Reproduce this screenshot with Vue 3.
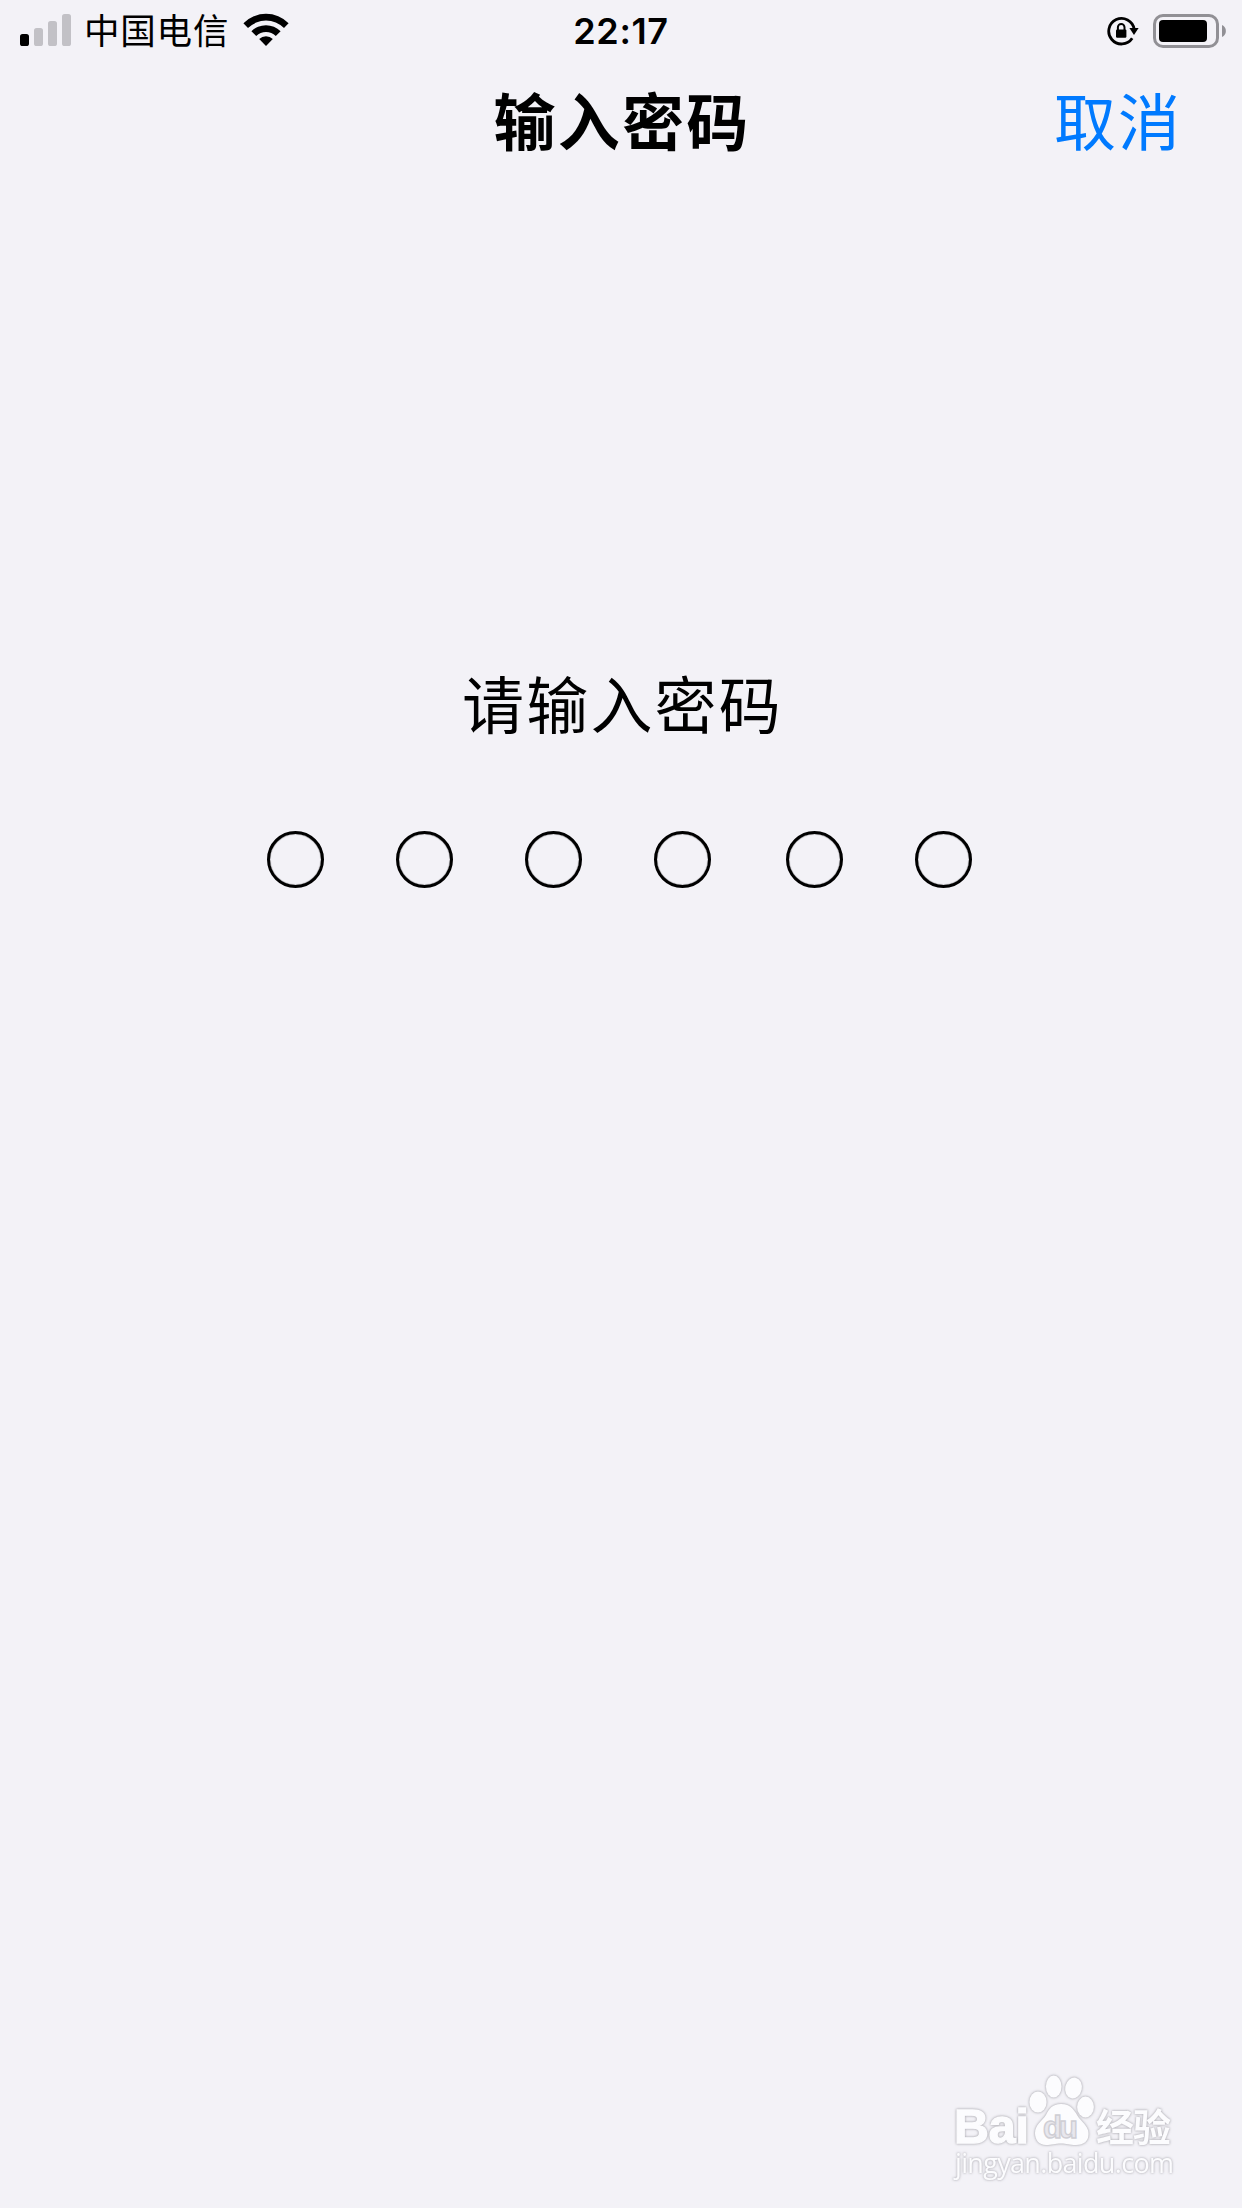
<template>
  <main class="screen">
    <header class="status-bar">
      <div class="status-left">
        <svg class="signal" viewBox="0 0 51 32" aria-hidden="true">
          <rect
            v-for="bar in bars"
            :key="bar.x"
            :x="bar.x"
            :y="32 - bar.height"
            width="9"
            :height="bar.height"
            rx="2.6"
            :class="{ 'is-active': bar.active }"
          />
        </svg>
        <span class="carrier">中国电信</span>
        <svg class="wifi" viewBox="0 0 46 34" aria-hidden="true">
          <path d="M0.4 10.2A32 32 0 0 1 45.6 10.2L41 15.1A25.3 25.3 0 0 0 5 15.1Z" />
          <path d="M8.4 18.2A20.7 20.7 0 0 1 37.6 18.2L32.8 22.9A14 14 0 0 0 13.2 22.9Z" />
          <path d="M16.2 26A9.6 9.6 0 0 1 29.8 26L23 33Z" />
        </svg>
      </div>
      <time class="clock">22:17</time>
      <div class="status-right">
        <svg class="rotation" viewBox="0 0 32 30" aria-hidden="true">
          <path class="ring" d="M25.2 22.3A12.8 12.8 0 1 1 27.2 13.2" />
          <path d="M22.4 12H31.6L27 18.9Z" />
          <rect x="9" y="13.4" width="10.4" height="8.4" rx="1.2" />
          <path class="shackle" d="M10.9 14V11.2A3.3 3.3 0 0 1 17.5 11.2V14" />
        </svg>
        <svg class="battery" viewBox="0 0 74 34" aria-hidden="true">
          <rect class="shell" x="1.5" y="1.5" width="63" height="31" rx="8.5" />
          <rect x="6" y="6" width="48" height="22" rx="4" />
          <path class="nub" d="M69 11A6.6 6.6 0 0 1 69 23Z" />
        </svg>
      </div>
    </header>

    <nav class="nav-bar">
      <h1 class="title">输入密码</h1>
      <button class="cancel" type="button">取消</button>
    </nav>

    <section class="passcode">
      <p class="prompt">请输入密码</p>
      <div class="dots">
        <span v-for="n in 6" :key="n" class="dot"></span>
      </div>
    </section>

    <footer class="watermark">
      <svg viewBox="0 0 270 150" aria-label="Baidu 经验">
        <g class="logo">
          <text class="latin" x="24" y="92.5" textLength="75" lengthAdjust="spacingAndGlyphs">Bai</text>
          <ellipse cx="108" cy="52" rx="8.6" ry="10.6" />
          <ellipse cx="123.7" cy="36.5" rx="7.8" ry="11" />
          <ellipse cx="143.5" cy="38" rx="8.3" ry="10.6" transform="rotate(12 143.5 38)" />
          <ellipse cx="155.5" cy="57" rx="8.4" ry="10.4" />
          <path
            d="M131 54C142 54 145 62 149 68C154 74 158.5 77 158.5 84C158.5 91 154 95 146 95C139 95 137 93.5 131 93.5C125 93.5 122 95 116 95C109 95 105 90 105 83C105 75 112 71 116 65C119 59 122 54 131 54Z"
          />
          <text class="hanzi" x="166" y="90.5" textLength="75">经验</text>
        </g>
        <text class="du" x="113" y="88" textLength="35">du</text>
        <text class="url" x="25" y="122.5" textLength="219">jingyan.baidu.com</text>
      </svg>
    </footer>
  </main>
</template>

<script setup>
const bars = [
  { x: 0, height: 12, active: true },
  { x: 14, height: 18, active: false },
  { x: 28, height: 25, active: false },
  { x: 42, height: 32, active: false },
];
</script>

<style>
body {
  margin: 0;
  background: #f3f2f7;
}
</style>

<style scoped>
.screen {
  display: flex;
  flex-direction: column;
  box-sizing: border-box;
  width: 1242px;
  height: 2208px;
  overflow: hidden;
  background: #f3f2f7;
  color: #000;
  font-family: "Noto Sans CJK SC", sans-serif;
}

/* Status bar */
.status-bar {
  display: grid;
  grid-template-columns: 1fr auto 1fr;
  align-items: center;
  height: 60px;
  padding: 0 15px 0 20px;
}

.status-left,
.status-right {
  display: flex;
  align-items: center;
}

.status-right {
  justify-content: flex-end;
  gap: 14px;
}

.signal {
  width: 51px;
  height: 32px;
  margin-bottom: 2px;
  fill: #c2c1c6;
}

.signal .is-active {
  fill: #000;
}

.carrier {
  margin-left: 13px;
  padding-bottom: 5px;
  font-size: 35.5px;
  line-height: 55px;
  letter-spacing: 0.8px;
}

.wifi {
  width: 46px;
  height: 34px;
  margin-bottom: 2px;
  margin-left: 14px;
}

.clock {
  margin-right: 5px;
  font-family: Inter, sans-serif;
  font-size: 36px;
  font-weight: 600;
  line-height: 62px;
  letter-spacing: 0.6px;
}

.rotation {
  width: 32px;
  height: 30px;
}

.ring,
.shackle {
  fill: none;
  stroke: #000;
  stroke-width: 2.8;
}

.shackle {
  stroke-width: 2;
}

.battery {
  width: 74px;
  height: 34px;
}

.shell {
  fill: none;
  stroke: #919095;
  stroke-width: 3;
}

.nub {
  fill: #919095;
}

/* Navigation */
.nav-bar {
  display: grid;
  grid-template-columns: 1fr auto 1fr;
  align-items: center;
  height: 118px;
  padding: 0 60px;
}

.title {
  grid-column: 2;
  margin: 0 -2px 0 0;
  font-size: 62px;
  font-weight: 700;
  line-height: 118px;
  letter-spacing: 2.2px;
}

.cancel {
  justify-self: end;
  padding: 0;
  border: 0;
  background: none;
  color: #007aff;
  font: inherit;
  font-size: 62px;
  line-height: 118px;
  letter-spacing: 2px;
}

/* Passcode entry */
.passcode {
  display: flex;
  flex-direction: column;
  align-items: center;
  padding-top: 474px;
}

.prompt {
  margin: 0 -3px 0 0;
  font-size: 62px;
  line-height: 100px;
  letter-spacing: 2.2px;
}

.dots {
  display: flex;
  gap: 72px;
  margin-top: 79px;
  margin-right: 3px;
}

.dot {
  box-sizing: border-box;
  width: 57px;
  height: 57px;
  border: 3px solid #000;
  border-radius: 50%;
  box-shadow: inset 0 0 1px #000;
}

.dot:nth-child(5) {
  margin-left: 3px;
}

/* Watermark */
.watermark {
  display: flex;
  justify-content: flex-end;
  margin-top: auto;
  padding: 0 42px 8px 0;
}

.watermark svg {
  width: 270px;
  height: 150px;
  fill: #fcfcfe;
}

.logo {
  filter: drop-shadow(0 0 1px #b2b1b7) drop-shadow(0 0 1px #cfced4);
}

.latin {
  stroke: #fcfcfe;
  stroke-width: 1.4;
  font: 700 48px "Liberation Sans", sans-serif;
}

.hanzi {
  font: 700 38px "Noto Sans CJK SC", sans-serif;
}

.du {
  fill: #e8e7ed;
  stroke: #cfced4;
  stroke-width: 1.4;
  font: 700 31px "Liberation Sans", sans-serif;
}

.url {
  filter: drop-shadow(0 0 1px #bbbac0) drop-shadow(0 0 1px #d4d3d9);
  font: 400 27px "Open Sans", sans-serif;
}
</style>
